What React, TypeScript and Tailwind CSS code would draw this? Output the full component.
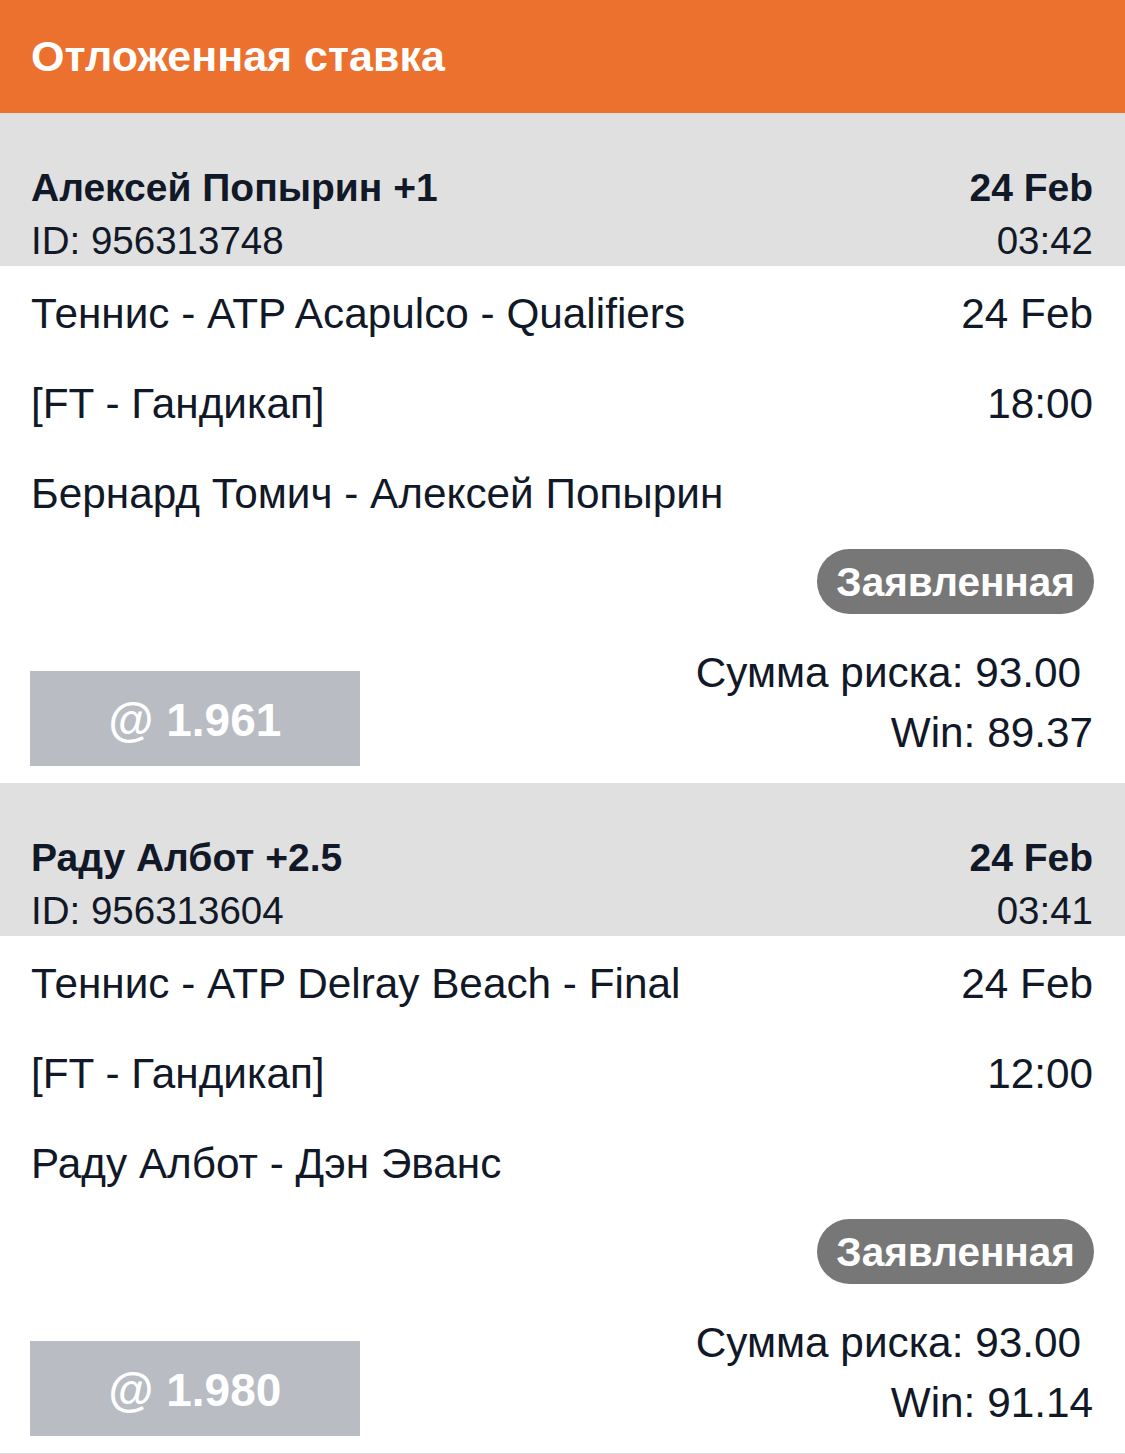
import React from 'react';

type Bet = {
  pick: string;
  id: string;
  placedDate: string;
  placedTime: string;
  league: string;
  market: string;
  match: string;
  eventDate: string;
  eventTime: string;
  odds: string;
  risk: string;
  win: string;
};

const bets: Bet[] = [
  {
    pick: 'Алексей Попырин +1',
    id: '956313748',
    placedDate: '24 Feb',
    placedTime: '03:42',
    league: 'Теннис - ATP Acapulco - Qualifiers',
    market: '[FT - Гандикап]',
    match: 'Бернард Томич - Алексей Попырин',
    eventDate: '24 Feb',
    eventTime: '18:00',
    odds: '1.961',
    risk: '93.00',
    win: '89.37',
  },
  {
    pick: 'Раду Албот +2.5',
    id: '956313604',
    placedDate: '24 Feb',
    placedTime: '03:41',
    league: 'Теннис - ATP Delray Beach - Final',
    market: '[FT - Гандикап]',
    match: 'Раду Албот - Дэн Эванс',
    eventDate: '24 Feb',
    eventTime: '12:00',
    odds: '1.980',
    risk: '93.00',
    win: '91.14',
  },
];

const BetCard: React.FC<{ bet: Bet }> = ({ bet }) => {
  return (
    <div className="bg-white">
      <div className="bg-[#e0e0e0] pl-[31px] pr-[32px] pt-[47px]">
        <div className="flex justify-between items-center h-[55px] text-[39px] font-bold">
          <span>{bet.pick}</span>
          <span>{bet.placedDate}</span>
        </div>
        <div className="flex justify-between items-center h-[51px] pt-[2px] text-[38.5px]">
          <span>ID: {bet.id}</span>
          <span>{bet.placedTime}</span>
        </div>
      </div>

      <div className="pl-[31px] pr-[32px] pt-[3px] text-[42.3px]">
        <div className="flex justify-between items-center h-[90px]">
          <span>{bet.league}</span>
          <span>{bet.eventDate}</span>
        </div>
        <div className="flex justify-between items-center h-[90px]">
          <span>{bet.market}</span>
          <span>{bet.eventTime}</span>
        </div>
        <div className="flex items-center h-[90px]">
          <span>{bet.match}</span>
        </div>

        <div className="flex justify-end mt-[10px] -mr-px">
          <span className="h-[65px] px-[19px] pt-[2px] rounded-full bg-[#777777] text-white font-bold text-[40.5px] flex items-center">
            Заявленная
          </span>
        </div>

        <div className="flex justify-between items-end mt-[29px] pb-[17px]">
          <div className="w-[330px] h-[95px] -ml-px pt-[2px] bg-[#b9bcc3] text-white font-bold text-[46px] flex items-center justify-center">
            @ {bet.odds}
          </div>
          <div className="flex flex-col items-end pb-[3px]">
            <div className="h-[60px] flex items-center pr-[12px]">Сумма риска: {bet.risk}</div>
            <div className="h-[60px] flex items-center">Win: {bet.win}</div>
          </div>
        </div>
      </div>
    </div>
  );
};

export default function App() {
  return (
    <div className="w-[1125px] min-h-[1454px] bg-[#e0e0e0] text-[#111827] font-['Liberation_Sans',Arial,sans-serif] leading-none">
      <div className="h-[113px] bg-[#ec702e] flex items-center px-[31px]">
        <h1 className="text-white font-bold text-[43px]">Отложенная ставка</h1>
      </div>
      {bets.map((bet) => (
        <BetCard key={bet.id} bet={bet} />
      ))}
    </div>
  );
}
